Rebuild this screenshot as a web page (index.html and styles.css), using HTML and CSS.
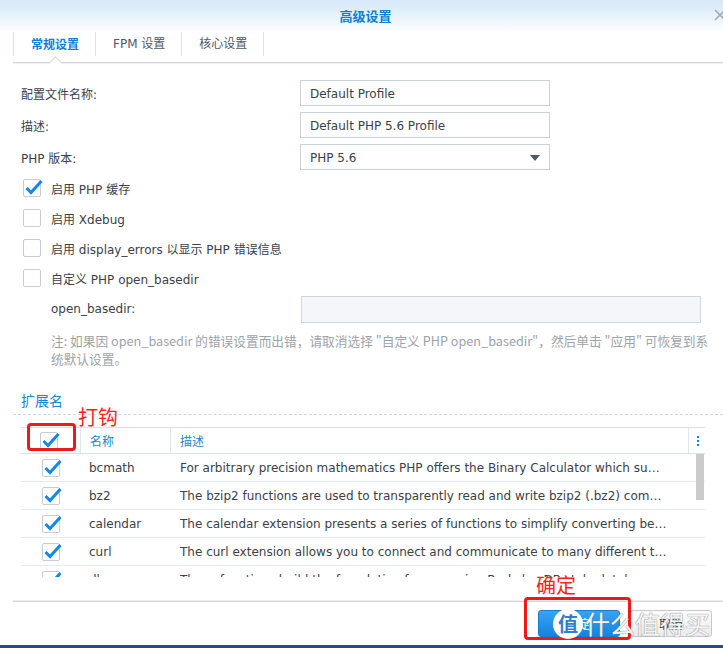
FILE: index.html
```html
<!DOCTYPE html>
<html lang="zh-CN">
<head>
<meta charset="utf-8">
<title>高级设置</title>
<link rel="stylesheet" href="styles.css">
</head>
<body>
<div class="titlebar">
  <span></span>
  <span class="title">高级设置</span>
  <span class="close"><svg width="14" height="14" viewBox="0 0 14 14"><path d="M2 2 L12 12 M12 2 L2 12" stroke="#a3acb5" stroke-width="1.6" fill="none"/></svg></span>
</div>
<div class="content">
  <div class="tabs">
    <div class="tab active">常规设置</div>
    <div class="tab">FPM 设置</div>
    <div class="tab last">核心设置</div>
  </div>
  <div class="form">
    <div class="fields">
      <div class="field"><span class="label">配置文件名称:</span><input class="input" value="Default Profile"></div>
      <div class="field"><span class="label">描述:</span><input class="input" value="Default PHP 5.6 Profile"></div>
      <div class="field"><span class="label">PHP 版本:</span><div class="input select"><span>PHP 5.6</span><span class="caret"></span></div></div>
    </div>
    <div class="checks">
      <div class="check-row"><svg class="cb" width="18" height="18" viewBox="0 0 18 18"><rect x="0.5" y="0.5" width="17" height="17" rx="1.5" fill="#fff" stroke="#c5ccd4"/><path d="M3.5 9 L8 13.5 L18.5 2" stroke="#1289ea" stroke-width="3" fill="none"/></svg><span>启用 PHP 缓存</span></div>
      <div class="check-row"><svg class="cb" width="18" height="18" viewBox="0 0 18 18"><rect x="0.5" y="0.5" width="17" height="17" rx="1.5" fill="#fff" stroke="#c5ccd4"/></svg><span>启用 Xdebug</span></div>
      <div class="check-row"><svg class="cb" width="18" height="18" viewBox="0 0 18 18"><rect x="0.5" y="0.5" width="17" height="17" rx="1.5" fill="#fff" stroke="#c5ccd4"/></svg><span>启用 display_errors 以显示 PHP 错误信息</span></div>
      <div class="check-row"><svg class="cb" width="18" height="18" viewBox="0 0 18 18"><rect x="0.5" y="0.5" width="17" height="17" rx="1.5" fill="#fff" stroke="#c5ccd4"/></svg><span>自定义 PHP open_basedir</span></div>
    </div>
    <div class="sub-field"><span class="sub-label">open_basedir:</span><div class="input wide disabled"></div></div>
    <div class="note">注: 如果因 open_basedir 的错误设置而出错，请取消选择 "自定义 PHP open_basedir"，然后单击 "应用" 可恢复到系<br>统默认设置。</div>
  </div>
  <div class="ext-heading">扩展名</div>
  <div class="table">
    <div class="thead">
      <div class="th cbcol"><svg class="cb" width="18" height="18" viewBox="0 0 18 18"><rect x="0.5" y="0.5" width="17" height="17" rx="1.5" fill="#fff" stroke="#c5ccd4"/><path d="M3.5 9 L8 13.5 L18.5 2" stroke="#1289ea" stroke-width="3" fill="none"/></svg></div>
      <div class="th sep">名称</div>
      <div class="th sep">描述</div>
      <div class="th sep menu"><svg width="4" height="12" viewBox="0 0 4 12"><rect x="1" y="1" width="2" height="2" fill="#1a85d6"/><rect x="1" y="5" width="2" height="2" fill="#1a85d6"/><rect x="1" y="9" width="2" height="2" fill="#1a85d6"/></svg></div>
    </div>
    <div class="tbody">
      <div class="tr"><div class="td cbcol"><svg class="cb" width="18" height="18" viewBox="0 0 18 18"><rect x="0.5" y="0.5" width="17" height="17" rx="1.5" fill="#fff" stroke="#c5ccd4"/><path d="M3.5 9 L8 13.5 L18.5 2" stroke="#1289ea" stroke-width="3" fill="none"/></svg></div><div class="td name">bcmath</div><div class="td desc">For arbitrary precision mathematics PHP offers the Binary Calculator which supports numbers of any size and precision.</div></div>
      <div class="tr"><div class="td cbcol"><svg class="cb" width="18" height="18" viewBox="0 0 18 18"><rect x="0.5" y="0.5" width="17" height="17" rx="1.5" fill="#fff" stroke="#c5ccd4"/><path d="M3.5 9 L8 13.5 L18.5 2" stroke="#1289ea" stroke-width="3" fill="none"/></svg></div><div class="td name">bz2</div><div class="td desc">The bzip2 functions are used to transparently read and write bzip2 (.bz2) compressed files.</div></div>
      <div class="tr"><div class="td cbcol"><svg class="cb" width="18" height="18" viewBox="0 0 18 18"><rect x="0.5" y="0.5" width="17" height="17" rx="1.5" fill="#fff" stroke="#c5ccd4"/><path d="M3.5 9 L8 13.5 L18.5 2" stroke="#1289ea" stroke-width="3" fill="none"/></svg></div><div class="td name">calendar</div><div class="td desc">The calendar extension presents a series of functions to simplify converting between different calendar formats.</div></div>
      <div class="tr"><div class="td cbcol"><svg class="cb" width="18" height="18" viewBox="0 0 18 18"><rect x="0.5" y="0.5" width="17" height="17" rx="1.5" fill="#fff" stroke="#c5ccd4"/><path d="M3.5 9 L8 13.5 L18.5 2" stroke="#1289ea" stroke-width="3" fill="none"/></svg></div><div class="td name">curl</div><div class="td desc">The curl extension allows you to connect and communicate to many different types of servers.</div></div>
      <div class="tr"><div class="td cbcol"><svg class="cb" width="18" height="18" viewBox="0 0 18 18"><rect x="0.5" y="0.5" width="17" height="17" rx="1.5" fill="#fff" stroke="#c5ccd4"/><path d="M3.5 9 L8 13.5 L18.5 2" stroke="#1289ea" stroke-width="3" fill="none"/></svg></div><div class="td name">dba</div><div class="td desc">These functions build the foundation for accessing Berkeley DB style databases.</div></div>
      <div class="scroll-thumb"></div>
    </div>
  </div>
  <div class="footer">
    <button class="btn primary">确定</button>
    <button class="btn">取消</button>
  </div>
</div>
<div class="bottom-strip"></div>

<div class="anno-text anno-t1">打钩</div>
<div class="anno-box anno-b1"></div>
<div class="anno-text anno-t2">确定</div>
<div class="anno-box anno-b2"></div>
<div class="wm-circle">值</div>
<div class="wm-text">什么值得买</div>
</body>
</html>
```
FILE: styles.css
```css
* { box-sizing: border-box; }
html, body { margin: 0; padding: 0; }
body {
  width: 723px;
  height: 648px;
  overflow: hidden;
  position: relative;
  background: #fff;
  font-family: "DejaVu Sans", "Noto Sans CJK SC", sans-serif;
  font-size: 12px;
  color: #3a4148;
}
.titlebar {
  height: 30px;
  display: grid;
  grid-template-columns: 1fr auto 1fr;
  align-items: center;
  background: linear-gradient(to bottom, #d5e7f8 0%, #eaf4fd 60%, #fbfdff 100%);
}
.title {
  font-family: "Noto Sans CJK SC", sans-serif;
  font-weight: bold;
  font-size: 13px;
  color: #0b7fd9;
  padding-left: 8px;
}
.close { justify-self: end; margin-right: -4px; display: flex; }
.content { padding-left: 13px; }
.tabs {
  height: 33px;
  display: flex;
  align-items: flex-start;
  padding-top: 2px;
  border-bottom: 1px solid #d3d6da;
  box-shadow: 0 1px 1px rgba(0,0,0,0.05);
}
.tab {
  position: relative;
  height: 24px;
  line-height: 24px;
  padding: 0 16px 0 17px;
  border-left: 1px solid #dbe2ea;
  font-family: "DejaVu Sans", "Noto Sans CJK SC", sans-serif;
  font-size: 12px;
  color: #4f5a65;
}
.tab.last { border-right: 1px solid #dbe2ea; }
.tab.active { color: #0b7fd9; font-weight: bold; font-family: "Noto Sans CJK SC", sans-serif; }
.tab.active::after {
  content: "";
  position: absolute;
  left: calc(50% - 4px);
  top: 26px;
  width: 8px;
  height: 8px;
  background: #fff;
  border-top: 1px solid #d3d6da;
  border-left: 1px solid #d3d6da;
  transform: rotate(45deg);
}
.form { padding: 17px 0 0 8px; display: flex; flex-direction: column; }
.fields { display: flex; flex-direction: column; gap: 6px; }
.field { display: flex; align-items: center; height: 26px; }
.label { width: 279px; }
.input {
  width: 250px;
  height: 26px;
  border: 1px solid #c9d1d9;
  padding: 1px 9px 0;
  font-family: "DejaVu Sans", sans-serif;
  font-size: 12px;
  color: #3a4148;
  background: #fff;
  outline: none;
  margin: 0;
  border-radius: 0;
}
.select { display: flex; align-items: center; justify-content: space-between; }
.caret {
  width: 0; height: 0;
  border-left: 5px solid transparent;
  border-right: 5px solid transparent;
  border-top: 6px solid #505860;
}
.checks { margin-top: 3px; }
.check-row { height: 30px; display: flex; align-items: center; padding-left: 2px; gap: 10px; }
.cb { overflow: visible; flex: none; }
.sub-field { height: 30px; display: flex; align-items: center; padding-left: 30px; margin-top: 1px; }
.sub-label { width: 250px; }
.input.wide { width: 400px; height: 27px; }
.input.disabled { background: #f4f6f9; border-color: #cfd6de; }
.note {
  margin-top: 8px;
  padding-left: 30px;
  line-height: 18px;
  font-family: "Noto Sans CJK SC", sans-serif;
  font-size: 12.7px;
  color: #9ea3a8;
  white-space: nowrap;
}
.ext-heading {
  margin-top: 23px;
  height: 24px;
  line-height: 18px;
  padding-left: 8px;
  font-family: "Noto Sans CJK SC", sans-serif;
  font-size: 14px;
  color: #1a85d6;
  border-bottom: 1px dashed #c2d9ee;
}
.table { margin: 12px 0 0 8px; width: 684px; }
.thead {
  display: grid;
  grid-template-columns: 59px 90px 518px 17px;
  height: 27px;
  border-top: 1px solid #d7e2ec;
  border-bottom: 1px solid #d7e2ec;
}
.th {
  display: flex;
  align-items: center;
  font-family: "Noto Sans CJK SC", sans-serif;
  font-size: 12px;
  color: #1a85d6;
  padding-left: 9px;
}
.th.sep { border-left: 1px solid #dde6ef; }
.th.cbcol { padding-left: 19px; }
.th.menu { padding-left: 7px; }
.tbody { position: relative; height: 123px; overflow: hidden; }
.tr {
  display: grid;
  grid-template-columns: 59px 90px 1fr;
  height: 28px;
  border-bottom: 1px solid #e6ebf0;
  align-items: center;
}
.td { white-space: nowrap; overflow: hidden; color: #3a4148; }
.td.cbcol { padding-left: 21px; display: flex; align-items: center; overflow: visible; }
.td.name { padding-left: 9px; }
.td.desc { padding: 0 38px 0 10px; text-overflow: ellipsis; }
.scroll-thumb {
  position: absolute;
  right: 1px;
  top: 0;
  width: 8px;
  height: 46px;
  background: #cbcbcb;
}
.footer {
  margin-top: 24px;
  height: 44px;
  border-top: 1px solid #d6d6d6;
  box-shadow: 0 -1px 0 #eeeeee;
  display: flex;
  justify-content: flex-end;
  align-items: flex-start;
  padding: 8px 11px 0 0;
  gap: 10px;
}
.btn {
  width: 82px;
  height: 27px;
  border: 1px solid #c4c8cc;
  border-radius: 3px;
  background: linear-gradient(to bottom, #fdfdfd, #e9ebed);
  font-family: "Noto Sans CJK SC", sans-serif;
  font-size: 12px;
  color: #333;
  padding: 0;
  margin: 0;
}
.btn.primary {
  border-color: #1b7bd0;
  background: linear-gradient(to bottom, #39a3f3, #1384de);
  color: #fff;
}
.bottom-strip { height: 3px; background: #1c4e9e; }
.anno-text {
  position: absolute;
  font-family: "Noto Sans CJK SC", sans-serif;
  font-size: 20px;
  line-height: 24px;
  color: #ff1e1e;
}
.anno-t1 { left: 78px; top: 405px; }
.anno-t2 { left: 536px; top: 573px; }
.anno-box { position: absolute; border: 3px solid #f01818; border-radius: 4px; }
.anno-b1 { left: 27px; top: 423px; width: 49px; height: 28px; }
.anno-b2 { left: 524px; top: 597px; width: 107px; height: 43px; }
.wm-circle {
  position: absolute;
  left: 553px;
  top: 609px;
  width: 30px;
  height: 30px;
  border-radius: 50%;
  background: #fff;
  color: #2d7fd2;
  font-family: "Noto Sans CJK SC", sans-serif;
  font-weight: bold;
  font-size: 20px;
  line-height: 30px;
  text-align: center;
}
.wm-text {
  position: absolute;
  left: 585px;
  top: 606px;
  font-family: "Noto Sans CJK SC", sans-serif;
  font-size: 25px;
  line-height: 34px;
  color: rgba(255,255,255,0.92);
  text-shadow: 0 0 1px #8a8a8a, 0 0 1px #8a8a8a;
}
```
